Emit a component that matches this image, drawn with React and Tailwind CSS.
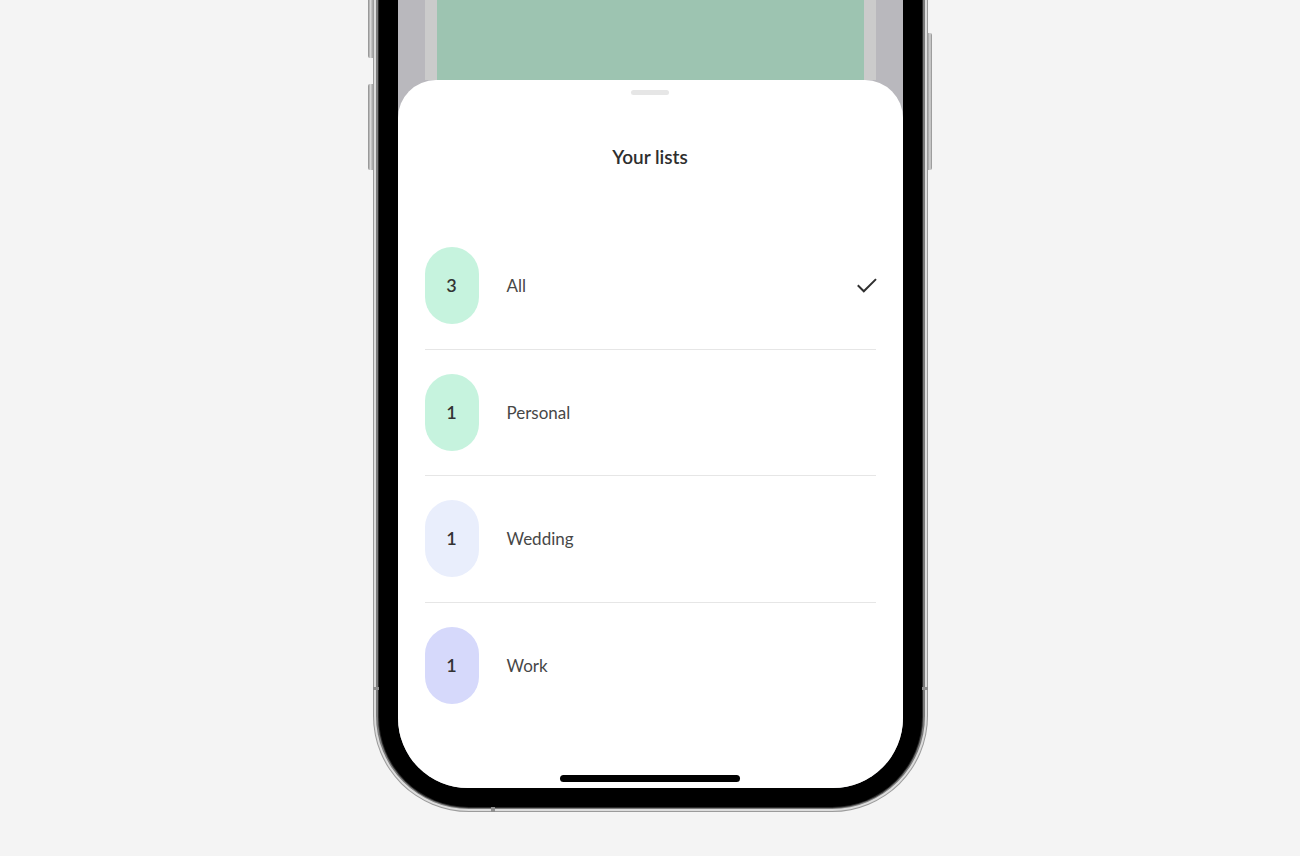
import React from "react";

const rows = [
  { n: "3", label: "All", bg: "bg-[#c6f3de]", checked: true, pb: "pb-[25px]" },
  { n: "1", label: "Personal", bg: "bg-[#c6f3de]", pb: "pb-6" },
  { n: "1", label: "Wedding", bg: "bg-[#e9eefc]", pb: "pb-[25px]" },
  { n: "1", label: "Work", bg: "bg-[#d6d9fb]", pb: "pb-6" },
];

function Check() {
  return (
    <svg width="20" height="16" viewBox="0 0 20 16" fill="none" className="mr-[-1px]">
      <path d="M1.5 8 L6.8 13.3 L18.3 1.8" stroke="#2f2f2f" strokeWidth="2" strokeLinecap="square" />
    </svg>
  );
}

export default function App() {
  return (
    <div
      className="h-[856px] w-full overflow-hidden bg-[#f4f4f4]"
      style={{ fontFamily: "Lato, 'Noto Sans', sans-serif" }}
    >
      <div className="relative mx-auto mt-[-120px] w-[555px]">
        {/* side buttons */}
        <div className="absolute left-[-5px] top-[100px] h-[78px] w-[5px] rounded-l-[2px] bg-gradient-to-r from-[#8a8a8a] via-[#d8d8d8] to-[#a0a0a0]" />
        <div className="absolute left-[-5px] top-[204px] h-[86px] w-[5px] rounded-l-[2px] bg-gradient-to-r from-[#8a8a8a] via-[#d8d8d8] to-[#a0a0a0]" />
        <div className="absolute right-[-4px] top-[153px] h-[137px] w-[4px] rounded-r-[2px] bg-gradient-to-l from-[#8a8a8a] via-[#d8d8d8] to-[#a0a0a0]" />
        {/* antenna bands */}
        <div className="absolute left-0 top-[807px] z-10 h-[3px] w-[6px] bg-[#8f8f8f]" />
        <div className="absolute right-0 top-[807px] z-10 h-[3px] w-[6px] bg-[#8f8f8f]" />
        <div className="absolute bottom-0 left-[118px] z-10 h-[5px] w-[4px] bg-[#8f8f8f]" />

        <div className="rounded-b-[96px] bg-[#9b9b9b] px-[1px] pb-[1px]">
          <div className="rounded-b-[95px] bg-[#dcdcdc] px-[2px] pb-[2px]">
            <div className="rounded-b-[93px] bg-[#7a7a7a] px-[2px] pb-[1px]">
              <div className="rounded-b-[91px] bg-[#2a2a2a] px-[1px] pb-[1px]">
                <div className="rounded-b-[90px] bg-black px-[19px] pb-[19px]">
                  <div className="flex h-[908px] flex-col overflow-hidden rounded-b-[70px] bg-[#b9b8bd]">
                    {/* presenting stack */}
                    <div className="h-[200px] shrink-0 px-[27px]">
                      <div className="h-full bg-[#cbcbcb] px-[12px]">
                        <div className="h-full bg-[#9dc4b1]" />
                      </div>
                    </div>
                    {/* sheet */}
                    <div className="flex flex-1 flex-col rounded-t-[38px] bg-white">
                      <div className="mx-auto mt-[10px] h-[5px] w-[38px] rounded-full bg-[#e6e6e6]" />
                      <h1 className="mt-[50px] text-center text-[19px] font-semibold leading-[24px] text-[#2e2e2e]">
                        Your lists
                      </h1>
                      <div className="mt-[54px] px-[27px]">
                        {rows.map((r, i) => (
                          <div
                            key={r.label}
                            className={
                              "flex items-center pt-6 " +
                              r.pb +
                              " " +
                              (i < rows.length - 1 ? "border-b border-[#e6e6e6]" : "")
                            }
                          >
                            <div
                              className={
                                "flex h-[77px] w-[54px] items-center justify-center rounded-full text-[18px] font-semibold text-[#333333] " +
                                r.bg
                              }
                            >
                              {r.n}
                            </div>
                            <div className="ml-[28px] flex-1 text-[17px] text-[#474747]">{r.label}</div>
                            {r.checked && <Check />}
                          </div>
                        ))}
                      </div>
                      <div className="mx-auto mb-[6px] mt-auto h-[7px] w-[180px] rounded-full bg-black" />
                    </div>
                  </div>
                </div>
              </div>
            </div>
          </div>
        </div>
      </div>
    </div>
  );
}
